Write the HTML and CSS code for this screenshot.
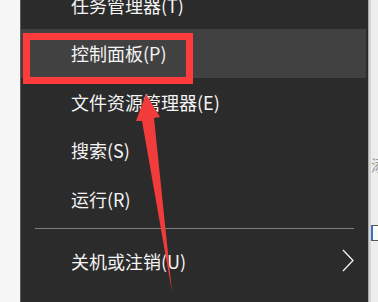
FILE: index.html
```html
<!DOCTYPE html>
<html lang="zh-CN">
<head>
<meta charset="utf-8">
<title>开始菜单</title>
<link rel="stylesheet" href="styles.css">
</head>
<body>
<div class="page">
  <div class="left-pane"></div>
  <div class="menu">
    <ul class="items">
      <li class="item">任务管理器(T)</li>
      <li class="item active">控制面板(P)</li>
      <li class="item">文件资源管理器(E)</li>
      <li class="item">搜索(S)</li>
      <li class="item">运行(R)</li>
      <li class="sep"></li>
      <li class="item has-sub">关机或注销(U)
        <svg class="chev" width="12" height="23" viewBox="0 0 12 23"><path d="M1 1 L11 11.5 L1 22" fill="none" stroke="#f2f2f2" stroke-width="1.3"/></svg>
      </li>
      <li class="item">桌面(D)</li>
    </ul>
    <div class="redbox"></div>
  </div>
  <div class="right-pane">
    <span class="frag">添</span>
    <span class="box"></span>
  </div>
  <svg class="arrow" width="378" height="302" viewBox="0 0 378 302">
    <polygon points="146,94 160,117 154,118 172,292 142,121 136,121" fill="#f23b3b"/>
  </svg>
</div>
</body>
</html>
```

FILE: styles.css
```css
html, body {
  margin: 0;
  padding: 0;
}
body {
  width: 378px;
  height: 302px;
  overflow: hidden;
  background: #f3f3f3;
  font-family: "Noto Sans CJK SC", "Noto Sans", sans-serif;
}
.page {
  position: relative;
  display: flex;
  width: 378px;
  height: 302px;
  overflow: hidden;
}
.left-pane {
  width: 20px;
  flex: none;
  background: #f6f6f6;
}
.menu {
  position: relative;
  width: 347px;
  flex: none;
  background: #2b2b2b;
  border-left: 1px solid #5d5d5d;
  overflow: hidden;
}
.items {
  list-style: none;
  margin: -19.5px 0 0 0;
  padding: 0;
}
.item {
  position: relative;
  height: 48.5px;
  margin-right: 2px;
  padding-left: 50px;
  display: flex;
  align-items: center;
  color: #f4f4f4;
  font-size: 18px;
  white-space: nowrap;
}
.item.active {
  background: #414141;
}
.sep {
  height: 1px;
  margin: 5px 14px 8px 14px;
  background: #7c7c7c;
}
.chev {
  position: absolute;
  left: 321px;
  top: 12px;
}
.redbox {
  position: absolute;
  left: 2px;
  top: 33px;
  width: 156px;
  height: 37px;
  border: 7px solid #ff3b3b;
}
.right-pane {
  flex: 1;
  border-left: 1px solid #a8a8a8;
  box-shadow: inset 2px 0 0 #d6d6d6;
  background: #eeeeee;
  display: flex;
  flex-direction: column;
  padding: 157px 0 0 2px;
}
.frag {
  font-size: 15px;
  line-height: 16px;
  color: #9a9a9a;
  white-space: nowrap;
}
.box {
  margin-top: 52px;
  width: 10px;
  height: 14px;
  border-left: 2px solid #3a6fc4;
  border-top: 1px solid #555;
  border-bottom: 1px solid #555;
  background: #fafafa;
}
.arrow {
  position: absolute;
  left: 0;
  top: 0;
  pointer-events: none;
}
```
